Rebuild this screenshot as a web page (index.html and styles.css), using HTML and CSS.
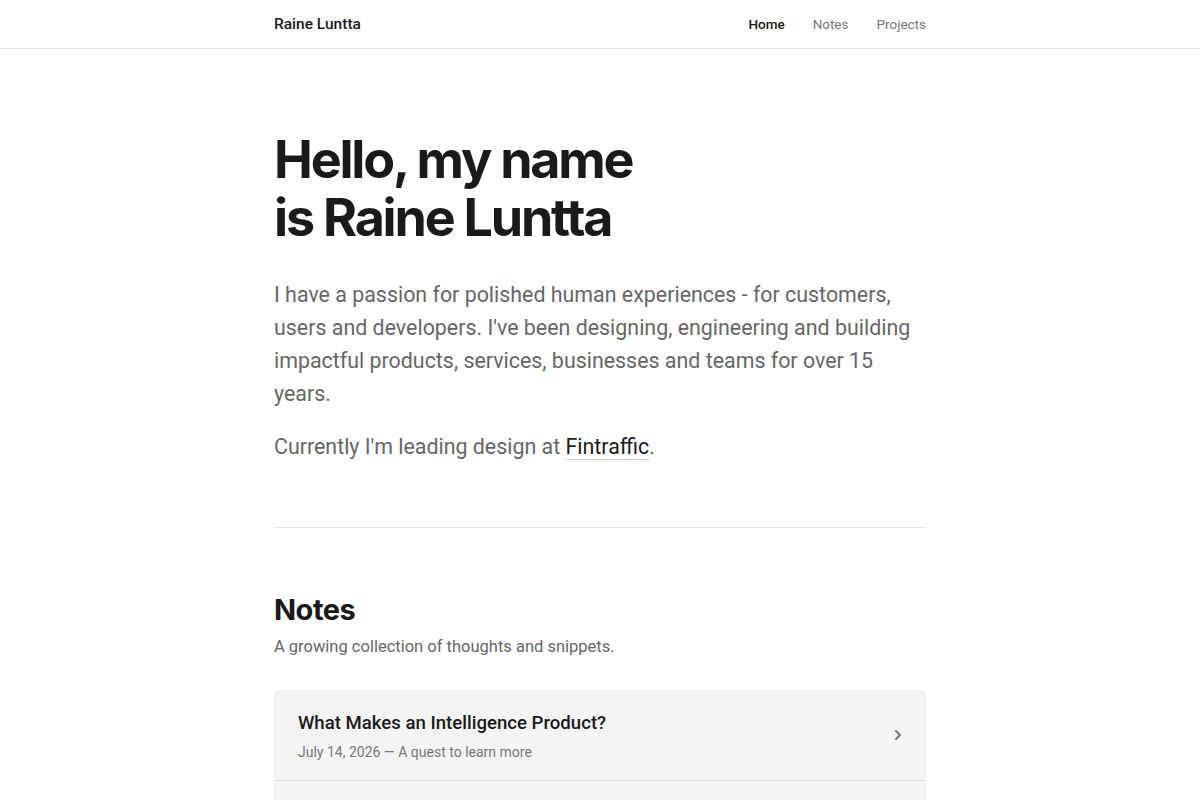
FILE: index.html
```html
<!DOCTYPE html>
<html lang="en">
<head>
  <meta charset="UTF-8" />
  <title>Raine Luntta</title>
  <link rel="stylesheet" href="styles.css">
</head>
<body>
  <header class="site-header">
    <div class="container header-inner">
      <a class="brand" href="#">Raine Luntta</a>
      <nav class="nav">
        <a class="nav-link active" href="#">Home</a>
        <a class="nav-link" href="#">Notes</a>
        <a class="nav-link" href="#">Projects</a>
      </nav>
    </div>
  </header>

  <main class="container">
    <section class="intro">
      <h1 class="intro-title">Hello, my name<br>is Raine Luntta</h1>
      <p class="intro-text">I have a passion for polished human experiences - for customers, users and developers. I've been designing, engineering and building impactful products, services, businesses and teams for over 15 years.</p>
      <p class="intro-text">Currently I'm leading design at <a class="inline-link" href="#">Fintraffic</a>.</p>
    </section>

    <hr class="divider">

    <section class="notes">
      <h2 class="section-title">Notes</h2>
      <p class="section-sub">A growing collection of thoughts and snippets.</p>

      <div class="note-list">
        <a class="note-item" href="#">
          <div class="note-body">
            <h3 class="note-title">What Makes an Intelligence Product?</h3>
            <div class="note-meta">July 14, 2026 — A quest to learn more</div>
          </div>
          <svg class="chevron" width="16" height="16" viewBox="0 0 16 16" fill="none">
            <path d="M6 4l4 4-4 4" stroke="currentColor" stroke-width="2" stroke-linecap="round" stroke-linejoin="round"/>
          </svg>
        </a>
        <a class="note-item" href="#">
          <div class="note-body">
            <h3 class="note-title">Designing for Trust</h3>
            <div class="note-meta">June 2, 2026 — Notes on reliability</div>
          </div>
          <svg class="chevron" width="16" height="16" viewBox="0 0 16 16" fill="none">
            <path d="M6 4l4 4-4 4" stroke="currentColor" stroke-width="2" stroke-linecap="round" stroke-linejoin="round"/>
          </svg>
        </a>
      </div>
    </section>
  </main>
</body>
</html>
```

FILE: styles.css
```css
* {
  margin: 0;
  padding: 0;
  box-sizing: border-box;
}
body {
  font-family: Roboto, "Liberation Sans", sans-serif;
  color: #1a1a1a;
  background: #fff;
}
a {
  color: inherit;
  text-decoration: none;
}
.container {
  width: 652px;
  margin: 0 auto;
}
.site-header {
  height: 49px;
  border-bottom: 1px solid #e6e6e6;
}
.header-inner {
  height: 48px;
  display: flex;
  align-items: center;
  justify-content: space-between;
}
.brand {
  font-size: 15.5px;
  font-weight: 500;
  color: #1a1a1a;
}
.nav {
  display: flex;
  gap: 28px;
}
.nav-link {
  font-size: 13.5px;
  color: #777;
}
.nav-link.active {
  color: #1a1a1a;
  font-weight: 500;
}
.intro {
  padding-top: 82px;
}
.intro-title {
  font-family: Inter, sans-serif;
  font-size: 52px;
  font-weight: 700;
  line-height: 58px;
  letter-spacing: -2.2px;
  color: #1a1a1a;
  margin-bottom: 31px;
}
.intro-text {
  font-size: 21.4px;
  line-height: 33px;
  color: #666;
  margin-bottom: 20px;
}
.inline-link {
  color: #1a1a1a;
  border-bottom: 1px solid #ccc;
}
.divider {
  border: 0;
  border-top: 1px solid #e6e6e6;
  margin-top: 64px;
}
.notes {
  padding-top: 64px;
}
.section-title {
  font-family: Inter, sans-serif;
  font-size: 29px;
  font-weight: 700;
  letter-spacing: -0.5px;
  line-height: 36px;
}
.section-sub {
  font-size: 16.5px;
  color: #666;
  margin-top: 9px;
}
.note-list {
  margin-top: 34px;
}
.note-item {
  display: flex;
  align-items: center;
  justify-content: space-between;
  background: #f4f4f5;
  padding: 20px 20px 20px 24px;
  border-bottom: 1px solid #ddd;
}
.note-item:first-child {
  border-radius: 4px 4px 0 0;
}
.note-title {
  font-size: 18.6px;
  font-weight: 500;
  color: #1a1a1a;
  line-height: 26px;
}
.note-meta {
  font-size: 14px;
  color: #777;
  margin-top: 8px;
}
.chevron {
  color: #777;
}
```
